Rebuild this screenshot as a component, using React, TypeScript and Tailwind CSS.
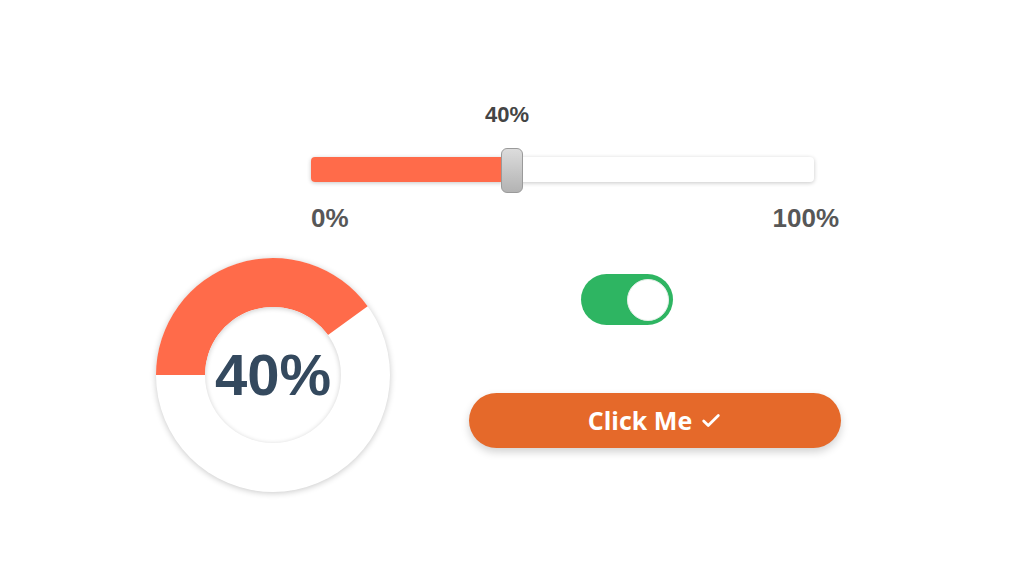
import React from 'react';
import { Check } from 'lucide-react';

const value = 40;

const Slider: React.FC = () => (
  <div className="ml-[311px] w-[528px] font-['Liberation_Sans',Arial,sans-serif]">
    <div className="relative h-[28px] w-[503px]">
      <span className="absolute left-[196px] top-0 -translate-x-1/2 text-[22px] leading-[28px] font-bold text-[#444]">
        {value}%
      </span>
    </div>
    <div className="relative mt-[28px] h-[25px] w-[503px] rounded-[4px] bg-white shadow-[0_1px_4px_rgba(0,0,0,0.22)]">
      <div className="h-full w-[192px] rounded-l-[4px] bg-[#FF6B4A]" />
      <div className="absolute left-[190px] top-[-9px] h-[45px] w-[22px] rounded-[6px] border border-[#9a9a9a] bg-gradient-to-b from-[#dcdcdc] to-[#b3b3b3]" />
    </div>
    <div className="mt-[20px] flex justify-between text-[26px] leading-[32px] font-bold text-[#575757]">
      <span>0%</span>
      <span>100%</span>
    </div>
  </div>
);

const Donut: React.FC = () => (
  <div className="relative flex h-[234px] w-[234px] items-center justify-center rounded-full bg-white shadow-[0_1px_6px_rgba(0,0,0,0.22)]">
    <svg className="absolute inset-0" width="234" height="234" viewBox="0 0 234 234">
      <path
        d="M 0 117 A 117 117 0 0 1 211.65 48.23 L 172.01 77.03 A 68 68 0 0 0 49 117 Z"
        fill="#FF6B4A"
      />
    </svg>
    <div className="relative flex h-[136px] w-[136px] items-center justify-center rounded-full bg-white shadow-[inset_0_1px_5px_rgba(0,0,0,0.2)]">
      <span className="font-['Liberation_Sans',Arial,sans-serif] text-[58px] leading-none font-bold text-[#34495E]">
        {value}%
      </span>
    </div>
  </div>
);

export default function App() {
  return (
    <div className="h-[574px] w-[1024px] overflow-hidden bg-white pt-[101px] font-['Open_Sans',sans-serif]">
      <Slider />
      <div className="mt-[24px] flex">
        <div className="ml-[156px]">
          <Donut />
        </div>
        <div className="ml-[79px] flex w-[372px] flex-col items-center">
          <div className="mr-[56px] mt-[16px] flex h-[51px] w-[92px] items-center justify-end rounded-full bg-[#2EB562] pr-[4px]">
            <div className="h-[42px] w-[42px] rounded-full border border-[#e6efe9] bg-white" />
          </div>
          <button className="mt-[68px] flex h-[55px] w-[372px] items-center justify-center gap-[8px] rounded-full bg-[#E5692A] text-[25px] font-bold text-white shadow-[0_4px_8px_rgba(0,0,0,0.18)]">
            Click Me
            <Check size={22} strokeWidth={3} />
          </button>
        </div>
      </div>
    </div>
  );
}
